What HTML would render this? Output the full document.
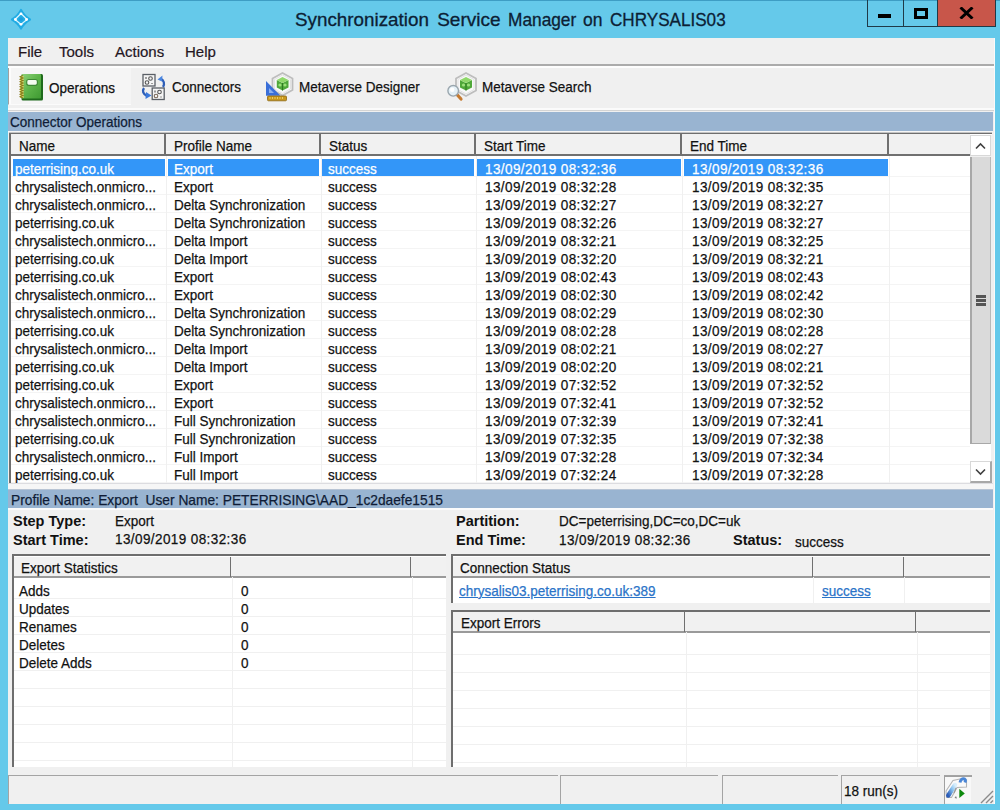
<!DOCTYPE html>
<html><head><meta charset="utf-8">
<style>
*{margin:0;padding:0;box-sizing:border-box}
html,body{width:1000px;height:810px;overflow:hidden;background:#65c9ea}
body{position:relative;font-family:"Liberation Sans",sans-serif;font-size:13.5px;color:#111}
.a{position:absolute}
.t{position:absolute;white-space:nowrap;line-height:1}
.ti{top:10px;font-size:19px;color:#0c2034;-webkit-text-stroke:0.3px #0c2034;transform-origin:0 0}
.wb{position:absolute;top:0;height:27px;border:1px solid #1f3a48;border-top:none}
#client{left:8px;top:38px;width:987px;height:766px;background:#f0f0f0;border-right:1px solid #fafafa}
.menu{top:44px;font-size:15px;color:#24161f;-webkit-text-stroke:0.2px #24161f}
.hbar{background:#99b4d1;color:#0f1c36}
.lv{background:#fff}
.hdr{position:absolute;background:#f1f1f1;border-bottom:2px solid #6e6e6e}
.hc{position:absolute;top:0;height:100%;border-right:2px solid #6e6e6e}
.row{position:absolute;left:0;height:18px;border-bottom:1px solid #f0f0f0}
.cell{position:absolute;top:3px;white-space:nowrap;line-height:1}
.sel{background:#3396f8;color:#fff}
.L{font-size:15px;transform:scaleX(0.9);transform-origin:0 0;-webkit-text-stroke:0.25px currentColor}
.L.d{letter-spacing:0.45px}
.b{font-weight:bold;font-size:14.5px}
a{color:#2a73c8;text-decoration:underline}
</style></head><body>
<!-- title bar -->
<div class="a" style="left:0;top:0;width:1000px;height:1px;background:#3e9dc4"></div>
<svg class="a" style="left:9px;top:7px" width="24" height="24" viewBox="0 0 24 24">
 <path d="M12 3 Q15 9 21 12.5 Q15 16 12 21.5 Q9 16 3 12.5 Q9 9 12 3 Z" fill="#22ace4" stroke="#22ace4" stroke-width="2.2" stroke-linejoin="round"/>
 <path d="M12 6.5 L18 12.5 L12 17.5 L6 12.5 Z" fill="none" stroke="#d8f4ff" stroke-width="1.3"/>
 <circle cx="12" cy="6.8" r="1.4" fill="#fff"/><circle cx="17.6" cy="12.5" r="1.4" fill="#fff"/>
 <circle cx="12" cy="17.3" r="1.4" fill="#fff"/><circle cx="6.4" cy="12.5" r="1.4" fill="#fff"/>
 <circle cx="12" cy="12.2" r="1.8" fill="#1a9ee0"/>
</svg>
<div class="t ti" style="left:295.4px;transform:scaleX(0.99)">Synchronization</div>
<div class="t ti" style="left:437.2px;transform:scaleX(1.0)">Service</div>
<div class="t ti" style="left:508px;transform:scaleX(0.91)">Manager</div>
<div class="t ti" style="left:583.2px;transform:scaleX(0.92)">on</div>
<div class="t ti" style="left:610.2px;transform:scaleX(0.9)">CHRYSALIS03</div>
<div class="wb" style="left:867px;width:37px"></div>
<div class="wb" style="left:903px;width:35px"></div>
<div class="wb" style="left:937px;width:59px;background:#c8564a"></div>
<div class="a" style="left:878px;top:14px;width:13px;height:4px;background:#000"></div>
<div class="a" style="left:914px;top:8px;width:14px;height:11px;border:3px solid #000"></div>
<svg class="a" style="left:959px;top:7px" width="15" height="12" viewBox="0 0 15 12"><path d="M1.5 0.5 L13.5 11.5 M13.5 0.5 L1.5 11.5" stroke="#000" stroke-width="3"/></svg>

<div id="client" class="a"></div>
<!-- menu -->
<div class="t menu" style="left:18px">File</div>
<div class="t menu" style="left:59px">Tools</div>
<div class="t menu" style="left:115px">Actions</div>
<div class="t menu" style="left:185px">Help</div>
<div class="a" style="left:8px;top:64px;width:986px;height:2px;background:#ababab"></div>
<div class="a" style="left:8px;top:66px;width:986px;height:2px;background:#fdfdfd"></div>
<div class="a" style="left:8px;top:108px;width:986px;height:2px;background:#fbfbfb"></div>
<div class="a" style="left:8px;top:110px;width:986px;height:1px;background:#d4d4d4"></div>
<!-- toolbar -->
<div class="a" style="left:8px;top:68px;width:123px;height:37px;background:#f5f5f5;border-left:1px solid #a0a0a0;border-bottom:1px solid #fbfbfb"></div>
<div class="a" style="left:9px;top:68px;width:2px;height:36px;background:#fcfcfc"></div>
<div class="t L" style="left:49px;top:80px">Operations</div>
<div class="t L" style="left:172px;top:79px">Connectors</div>
<div class="t L" style="left:299px;top:79px">Metaverse Designer</div>
<div class="t L" style="left:482px;top:79px">Metaverse Search</div>


<!-- toolbar icons -->
<svg class="a" style="left:18px;top:72px" width="28" height="31" viewBox="0 0 28 31">
 <defs><linearGradient id="gn" x1="0" y1="0" x2="1" y2="1"><stop offset="0" stop-color="#8ed27a"/><stop offset="0.5" stop-color="#5db449"/><stop offset="1" stop-color="#3f9a32"/></linearGradient></defs>
 <rect x="3.5" y="2" width="21.5" height="26.5" rx="1.5" fill="#1f6a1c"/>
 <rect x="3.5" y="2" width="19.5" height="24.5" rx="1" fill="url(#gn)"/>
 <rect x="8.7" y="7.5" width="10.7" height="5.8" rx="2" fill="#f4fbef" stroke="#3d8a33" stroke-width="1.2"/>
 <path d="M2 4 h3.5 v22 h-3.5 Z" fill="#e8e070"/>
 <path d="M5 3.5 L2.2 4.8 L5 6.0 L2.2 7.3 L5 8.5 L2.2 9.8 L5 11.0 L2.2 12.3 L5 13.5 L2.2 14.8 L5 16.0 L2.2 17.3 L5 18.5 L2.2 19.8 L5 21.0 L2.2 22.3 L5 23.5 L2.2 24.8 L5 26.0" fill="none" stroke="#857a1c" stroke-width="1.1"/>
</svg>
<svg class="a" style="left:140px;top:72px" width="28" height="30" viewBox="0 0 28 30">
 <rect x="3" y="2.5" width="12" height="11.5" fill="#f4f4f4" stroke="#5a5f66" stroke-width="1.3"/>
 <rect x="12.2" y="16" width="12" height="11.5" fill="#f4f4f4" stroke="#5a5f66" stroke-width="1.3"/>
 <circle cx="10.5" cy="6.5" r="1.8" fill="none" stroke="#555" stroke-width="1.1"/>
 <circle cx="7" cy="10.5" r="1.8" fill="none" stroke="#555" stroke-width="1.1"/>
 <path d="M6 5 v2 M12 11 v1" stroke="#555" stroke-width="1.1"/>
 <circle cx="19.5" cy="20" r="1.8" fill="none" stroke="#555" stroke-width="1.1"/>
 <circle cx="16" cy="24" r="1.8" fill="none" stroke="#7a6a5a" stroke-width="1.1"/>
 <path d="M15 18.5 v2 M21 24.5 v1" stroke="#555" stroke-width="1.1"/>
 <path d="M23 15 C25 12 24 8 20.5 6.5" fill="none" stroke="#2f5fb8" stroke-width="2.3"/>
 <path d="M17.5 7.5 L22.5 3.5 L22 9.5 Z" fill="#4a86e0"/>
 <path d="M4 16 C2 19 3 22 7 24" fill="none" stroke="#2f5fb8" stroke-width="2.3"/>
 <path d="M6 20 L11.5 23.5 L5.5 27 Z" fill="#3a78da"/>
</svg>
<svg class="a" style="left:264px;top:71px" width="32" height="32" viewBox="0 0 32 32">
 <path d="M18.5 2 L28.5 7.5 L28.5 19 L18.5 24.5 L8.5 19 L8.5 7.5 Z" fill="#f8f8f8" stroke="#bdbdbd" stroke-width="1.8"/>
 <path d="M18.5 4 L26.5 8.5 L26.5 18 L18.5 22.5 L10.5 18 L10.5 8.5 Z" fill="none" stroke="#e2e2e2" stroke-width="1"/>
 <path d="M12.8 9 L18.5 12 L24.5 9 L24.5 16.5 L18.5 19.5 L12.8 16.5 Z" fill="#4fa83a"/>
 <path d="M12.8 9 L18.5 6 L24.5 9 L18.5 12 Z" fill="#8fd86a"/>
 <path d="M18.5 12 V19.5" stroke="#2e7a22" stroke-width="1"/>
 <circle cx="16" cy="14" r="1.6" fill="#9be07a"/><circle cx="21" cy="14" r="1.6" fill="#9be07a"/>
 <path d="M2 10 L16.5 24.8 L2 24.8 Z" fill="#3a6fd8"/>
 <path d="M5 17 L10 22 L5 22 Z" fill="#8ab0f0"/>
 <rect x="3.5" y="25" width="19" height="4.8" rx="1" fill="#c8961c" stroke="#8a6410" stroke-width="0.8"/>
 <path d="M6 26 v2 M8.5 26 v2 M11 26 v2 M13.5 26 v2 M16 26 v2 M18.5 26 v2" stroke="#f5d870" stroke-width="0.8"/>
</svg>
<svg class="a" style="left:444px;top:71px" width="34" height="32" viewBox="0 0 34 32">
 <path d="M22 2 L32 7.5 L32 19.5 L22 25 L12 19.5 L12 7.5 Z" fill="#f8f8f8" stroke="#bdbdbd" stroke-width="1.8"/>
 <path d="M22 4 L30 8.5 L30 18.5 L22 23 L14 18.5 L14 8.5 Z" fill="none" stroke="#e2e2e2" stroke-width="1"/>
 <path d="M16 9 L22 12 L28 9 L28 16.5 L22 19.5 L16 16.5 Z" fill="#4fa83a"/>
 <path d="M16 9 L22 6 L28 9 L22 12 Z" fill="#8fd86a"/>
 <path d="M22 12 V19.5" stroke="#2e7a22" stroke-width="1"/>
 <circle cx="19.5" cy="14" r="1.6" fill="#9be07a"/><circle cx="24.5" cy="14" r="1.6" fill="#9be07a"/>
 <path d="M12.5 23 L17 28" stroke="#c57a30" stroke-width="3.2" stroke-linecap="round"/>
 <circle cx="9.2" cy="19.8" r="5.3" fill="#e6f2f8" stroke="#9aa6ae" stroke-width="1.4"/>
 <circle cx="8.2" cy="18.8" r="2.2" fill="#ffffff"/>
</svg>
<!-- status icon -->
<div class="a" style="left:945px;top:777px;width:26px;height:26px;background:#f8f8f8"></div>
<svg class="a" style="left:944px;top:775px" width="28" height="28" viewBox="0 0 28 28">
 <defs><linearGradient id="bl" x1="0" y1="1" x2="1" y2="0"><stop offset="0" stop-color="#2a5cb8"/><stop offset="0.6" stop-color="#8cc4f0"/><stop offset="1" stop-color="#d8eefc"/></linearGradient></defs>
 <path d="M2 16 L9 5.5 L18 3.5 L22.5 5 L22.5 12 L13 12.5 L7.5 22.5 L2.5 22.5 Z" fill="#fafafa" stroke="#b4b4b4" stroke-width="1.1"/>
 <path d="M4.3 20.5 L11 10" stroke="url(#bl)" stroke-width="4.5" stroke-linecap="round"/>
 <path d="M16 7.5 Q17 3 20.5 4 Q22 5 21 7.5" fill="none" stroke="#4a86d6" stroke-width="3"/>
 <path d="M12 13 L10 18" stroke="#9a9a9a" stroke-width="1.2"/>
 <path d="M15.3 13.8 L20.8 18.6 L15.3 23 Z" fill="#0e8a0e"/>
 <path d="M10.5 23 L13 23.5 L12 21 Z" fill="#7a7a7a"/>
</svg>
<svg class="a" style="left:978px;top:787px" width="16" height="17" viewBox="0 0 16 17">
 <path d="M3 16 L15 4 M8 16 L15 9 M12.5 16 L15 13.5" stroke="#8a8a8a" stroke-width="1.4"/>
</svg>

<!-- connector operations bar -->
<div class="a hbar" style="left:8px;top:112px;width:985px;height:19px"></div>
<div class="t L" style="left:10px;top:114px;color:#0f1c36">Connector Operations</div>

<!-- list view -->
<div class="a lv" style="left:9px;top:132px;width:983px;height:351px;border-top:2px solid #6e6e6e;border-left:2px solid #6e6e6e"></div>
<div class="a" style="left:8px;top:131px;width:985px;height:1px;background:#f6f6f6"></div>
<div class="a" style="left:9px;top:132px;width:983px;height:1px;background:#c4c4c4"></div>

<div class="a" style="left:11px;top:134px;width:959px;height:22px;background:#f1f1f1"></div>
<div class="a" style="left:11px;top:154px;width:959px;height:2px;background:#707070"></div>
<div class="a" style="left:164px;top:134px;width:2px;height:22px;background:#707070"></div>
<div class="a" style="left:319px;top:134px;width:2px;height:22px;background:#707070"></div>
<div class="a" style="left:474px;top:134px;width:2px;height:22px;background:#707070"></div>
<div class="a" style="left:680px;top:134px;width:2px;height:22px;background:#707070"></div>
<div class="a" style="left:887px;top:134px;width:2px;height:22px;background:#707070"></div>
<div class="t L" style="left:19px;top:137.5px">Name</div>
<div class="t L" style="left:174px;top:137.5px">Profile Name</div>
<div class="t L" style="left:329px;top:137.5px">Status</div>
<div class="t L" style="left:484px;top:137.5px">Start Time</div>
<div class="t L" style="left:690px;top:137.5px">End Time</div>
<div class="a" style="left:11px;top:176px;width:959px;height:1px;background:#f4f4f4"></div>
<div class="a" style="left:13px;top:159px;width:152px;height:17px;background:#3396f8"></div>
<div class="a" style="left:168px;top:159px;width:151px;height:17px;background:#3396f8"></div>
<div class="a" style="left:322px;top:159px;width:152px;height:17px;background:#3396f8"></div>
<div class="a" style="left:477px;top:159px;width:204px;height:17px;background:#3396f8"></div>
<div class="a" style="left:684px;top:159px;width:204px;height:17px;background:#3396f8"></div>
<div class="t L " style="left:15px;top:161px;color:#fff">peterrising.co.uk</div>
<div class="t L " style="left:174px;top:161px;color:#fff">Export</div>
<div class="t L " style="left:328px;top:161px;color:#fff">success</div>
<div class="t L d" style="left:485px;top:161px;color:#fff">13/09/2019 08:32:36</div>
<div class="t L d" style="left:691.5px;top:161px;color:#fff">13/09/2019 08:32:36</div>
<div class="a" style="left:11px;top:194px;width:959px;height:1px;background:#f4f4f4"></div>
<div class="t L " style="left:15px;top:179px;color:#111">chrysalistech.onmicro...</div>
<div class="t L " style="left:174px;top:179px;color:#111">Export</div>
<div class="t L " style="left:328px;top:179px;color:#111">success</div>
<div class="t L d" style="left:485px;top:179px;color:#111">13/09/2019 08:32:28</div>
<div class="t L d" style="left:691.5px;top:179px;color:#111">13/09/2019 08:32:35</div>
<div class="a" style="left:11px;top:212px;width:959px;height:1px;background:#f4f4f4"></div>
<div class="t L " style="left:15px;top:197px;color:#111">chrysalistech.onmicro...</div>
<div class="t L " style="left:174px;top:197px;color:#111">Delta Synchronization</div>
<div class="t L " style="left:328px;top:197px;color:#111">success</div>
<div class="t L d" style="left:485px;top:197px;color:#111">13/09/2019 08:32:27</div>
<div class="t L d" style="left:691.5px;top:197px;color:#111">13/09/2019 08:32:27</div>
<div class="a" style="left:11px;top:230px;width:959px;height:1px;background:#f4f4f4"></div>
<div class="t L " style="left:15px;top:215px;color:#111">peterrising.co.uk</div>
<div class="t L " style="left:174px;top:215px;color:#111">Delta Synchronization</div>
<div class="t L " style="left:328px;top:215px;color:#111">success</div>
<div class="t L d" style="left:485px;top:215px;color:#111">13/09/2019 08:32:26</div>
<div class="t L d" style="left:691.5px;top:215px;color:#111">13/09/2019 08:32:27</div>
<div class="a" style="left:11px;top:248px;width:959px;height:1px;background:#f4f4f4"></div>
<div class="t L " style="left:15px;top:233px;color:#111">chrysalistech.onmicro...</div>
<div class="t L " style="left:174px;top:233px;color:#111">Delta Import</div>
<div class="t L " style="left:328px;top:233px;color:#111">success</div>
<div class="t L d" style="left:485px;top:233px;color:#111">13/09/2019 08:32:21</div>
<div class="t L d" style="left:691.5px;top:233px;color:#111">13/09/2019 08:32:25</div>
<div class="a" style="left:11px;top:266px;width:959px;height:1px;background:#f4f4f4"></div>
<div class="t L " style="left:15px;top:251px;color:#111">peterrising.co.uk</div>
<div class="t L " style="left:174px;top:251px;color:#111">Delta Import</div>
<div class="t L " style="left:328px;top:251px;color:#111">success</div>
<div class="t L d" style="left:485px;top:251px;color:#111">13/09/2019 08:32:20</div>
<div class="t L d" style="left:691.5px;top:251px;color:#111">13/09/2019 08:32:21</div>
<div class="a" style="left:11px;top:284px;width:959px;height:1px;background:#f4f4f4"></div>
<div class="t L " style="left:15px;top:269px;color:#111">peterrising.co.uk</div>
<div class="t L " style="left:174px;top:269px;color:#111">Export</div>
<div class="t L " style="left:328px;top:269px;color:#111">success</div>
<div class="t L d" style="left:485px;top:269px;color:#111">13/09/2019 08:02:43</div>
<div class="t L d" style="left:691.5px;top:269px;color:#111">13/09/2019 08:02:43</div>
<div class="a" style="left:11px;top:302px;width:959px;height:1px;background:#f4f4f4"></div>
<div class="t L " style="left:15px;top:287px;color:#111">chrysalistech.onmicro...</div>
<div class="t L " style="left:174px;top:287px;color:#111">Export</div>
<div class="t L " style="left:328px;top:287px;color:#111">success</div>
<div class="t L d" style="left:485px;top:287px;color:#111">13/09/2019 08:02:30</div>
<div class="t L d" style="left:691.5px;top:287px;color:#111">13/09/2019 08:02:42</div>
<div class="a" style="left:11px;top:320px;width:959px;height:1px;background:#f4f4f4"></div>
<div class="t L " style="left:15px;top:305px;color:#111">chrysalistech.onmicro...</div>
<div class="t L " style="left:174px;top:305px;color:#111">Delta Synchronization</div>
<div class="t L " style="left:328px;top:305px;color:#111">success</div>
<div class="t L d" style="left:485px;top:305px;color:#111">13/09/2019 08:02:29</div>
<div class="t L d" style="left:691.5px;top:305px;color:#111">13/09/2019 08:02:30</div>
<div class="a" style="left:11px;top:338px;width:959px;height:1px;background:#f4f4f4"></div>
<div class="t L " style="left:15px;top:323px;color:#111">peterrising.co.uk</div>
<div class="t L " style="left:174px;top:323px;color:#111">Delta Synchronization</div>
<div class="t L " style="left:328px;top:323px;color:#111">success</div>
<div class="t L d" style="left:485px;top:323px;color:#111">13/09/2019 08:02:28</div>
<div class="t L d" style="left:691.5px;top:323px;color:#111">13/09/2019 08:02:28</div>
<div class="a" style="left:11px;top:356px;width:959px;height:1px;background:#f4f4f4"></div>
<div class="t L " style="left:15px;top:341px;color:#111">chrysalistech.onmicro...</div>
<div class="t L " style="left:174px;top:341px;color:#111">Delta Import</div>
<div class="t L " style="left:328px;top:341px;color:#111">success</div>
<div class="t L d" style="left:485px;top:341px;color:#111">13/09/2019 08:02:21</div>
<div class="t L d" style="left:691.5px;top:341px;color:#111">13/09/2019 08:02:27</div>
<div class="a" style="left:11px;top:374px;width:959px;height:1px;background:#f4f4f4"></div>
<div class="t L " style="left:15px;top:359px;color:#111">peterrising.co.uk</div>
<div class="t L " style="left:174px;top:359px;color:#111">Delta Import</div>
<div class="t L " style="left:328px;top:359px;color:#111">success</div>
<div class="t L d" style="left:485px;top:359px;color:#111">13/09/2019 08:02:20</div>
<div class="t L d" style="left:691.5px;top:359px;color:#111">13/09/2019 08:02:21</div>
<div class="a" style="left:11px;top:392px;width:959px;height:1px;background:#f4f4f4"></div>
<div class="t L " style="left:15px;top:377px;color:#111">peterrising.co.uk</div>
<div class="t L " style="left:174px;top:377px;color:#111">Export</div>
<div class="t L " style="left:328px;top:377px;color:#111">success</div>
<div class="t L d" style="left:485px;top:377px;color:#111">13/09/2019 07:32:52</div>
<div class="t L d" style="left:691.5px;top:377px;color:#111">13/09/2019 07:32:52</div>
<div class="a" style="left:11px;top:410px;width:959px;height:1px;background:#f4f4f4"></div>
<div class="t L " style="left:15px;top:395px;color:#111">chrysalistech.onmicro...</div>
<div class="t L " style="left:174px;top:395px;color:#111">Export</div>
<div class="t L " style="left:328px;top:395px;color:#111">success</div>
<div class="t L d" style="left:485px;top:395px;color:#111">13/09/2019 07:32:41</div>
<div class="t L d" style="left:691.5px;top:395px;color:#111">13/09/2019 07:32:52</div>
<div class="a" style="left:11px;top:428px;width:959px;height:1px;background:#f4f4f4"></div>
<div class="t L " style="left:15px;top:413px;color:#111">chrysalistech.onmicro...</div>
<div class="t L " style="left:174px;top:413px;color:#111">Full Synchronization</div>
<div class="t L " style="left:328px;top:413px;color:#111">success</div>
<div class="t L d" style="left:485px;top:413px;color:#111">13/09/2019 07:32:39</div>
<div class="t L d" style="left:691.5px;top:413px;color:#111">13/09/2019 07:32:41</div>
<div class="a" style="left:11px;top:446px;width:959px;height:1px;background:#f4f4f4"></div>
<div class="t L " style="left:15px;top:431px;color:#111">peterrising.co.uk</div>
<div class="t L " style="left:174px;top:431px;color:#111">Full Synchronization</div>
<div class="t L " style="left:328px;top:431px;color:#111">success</div>
<div class="t L d" style="left:485px;top:431px;color:#111">13/09/2019 07:32:35</div>
<div class="t L d" style="left:691.5px;top:431px;color:#111">13/09/2019 07:32:38</div>
<div class="a" style="left:11px;top:464px;width:959px;height:1px;background:#f4f4f4"></div>
<div class="t L " style="left:15px;top:449px;color:#111">chrysalistech.onmicro...</div>
<div class="t L " style="left:174px;top:449px;color:#111">Full Import</div>
<div class="t L " style="left:328px;top:449px;color:#111">success</div>
<div class="t L d" style="left:485px;top:449px;color:#111">13/09/2019 07:32:28</div>
<div class="t L d" style="left:691.5px;top:449px;color:#111">13/09/2019 07:32:34</div>
<div class="a" style="left:11px;top:482px;width:959px;height:1px;background:#f4f4f4"></div>
<div class="t L " style="left:15px;top:467px;color:#111">peterrising.co.uk</div>
<div class="t L " style="left:174px;top:467px;color:#111">Full Import</div>
<div class="t L " style="left:328px;top:467px;color:#111">success</div>
<div class="t L d" style="left:485px;top:467px;color:#111">13/09/2019 07:32:24</div>
<div class="t L d" style="left:691.5px;top:467px;color:#111">13/09/2019 07:32:28</div>
<div class="a" style="left:166px;top:156px;width:1px;height:327px;background:#f0f0f0"></div>
<div class="a" style="left:321px;top:156px;width:1px;height:327px;background:#f0f0f0"></div>
<div class="a" style="left:476px;top:156px;width:1px;height:327px;background:#f0f0f0"></div>
<div class="a" style="left:682px;top:156px;width:1px;height:327px;background:#f0f0f0"></div>
<div class="a" style="left:889px;top:156px;width:1px;height:327px;background:#f0f0f0"></div>

<!-- scrollbar -->
<div class="a" style="left:970px;top:135px;width:22px;height:348px;background:#f0f0f0"></div>
<div class="a" style="left:970px;top:135px;width:21px;height:21px;background:#fff;border:1px solid #d8d8d8"></div>
<svg class="a" style="left:975px;top:142px" width="11" height="8" viewBox="0 0 11 8"><path d="M1 6.5 L5.5 2 L10 6.5" fill="none" stroke="#404040" stroke-width="1.6"/></svg>
<div class="a" style="left:970px;top:157px;width:21px;height:287px;background:#dadada;border-left:2px solid #a8a8a8;border-right:1px solid #b8b8b8;border-bottom:1px solid #a8a8a8"></div>
<div class="a" style="left:976px;top:295px;width:10px;height:2.5px;background:#555"></div>
<div class="a" style="left:976px;top:299px;width:10px;height:2.5px;background:#555"></div>
<div class="a" style="left:976px;top:303px;width:10px;height:2.5px;background:#555"></div>
<div class="a" style="left:970px;top:444px;width:21px;height:18px;background:#fff"></div>
<div class="a" style="left:970px;top:461px;width:22px;height:22px;background:#fff;border:1px solid #d8d8d8;border-right:2px solid #a8a8a8;border-bottom:2px solid #a8a8a8"></div>
<svg class="a" style="left:975px;top:468px" width="11" height="8" viewBox="0 0 11 8"><path d="M1 1.5 L5.5 6 L10 1.5" fill="none" stroke="#404040" stroke-width="1.6"/></svg>

<!-- details -->
<div class="a" style="left:8px;top:483px;width:985px;height:1px;background:#dcdce0"></div>
<div class="a" style="left:8px;top:484px;width:985px;height:5px;background:#f6f6f6"></div>
<div class="a" style="left:8px;top:489px;width:985px;height:1px;background:#b8c4d4"></div>
<div class="a hbar" style="left:8px;top:489.5px;width:985px;height:18.5px"></div>
<div class="a" style="left:8px;top:508px;width:985px;height:2px;background:#fbfbfb"></div>
<div class="t L" style="left:10.5px;top:492px;transform:scaleX(0.917);color:#0f1c36">Profile Name: Export&nbsp; User Name: PETERRISING\AAD_1c2daefe1515</div>
<div class="t b" style="left:13px;top:514px">Step Type:</div>
<div class="t L" style="left:115px;top:513px">Export</div>
<div class="t b" style="left:13px;top:533px">Start Time:</div>
<div class="t L d" style="left:115px;top:531px">13/09/2019 08:32:36</div>
<div class="t b" style="left:456px;top:514px">Partition:</div>
<div class="t L" style="left:559px;top:513px">DC=peterrising,DC=co,DC=uk</div>
<div class="t b" style="left:456px;top:533px">End Time:</div>
<div class="t L d" style="left:559px;top:532px">13/09/2019 08:32:36</div>
<div class="t b" style="left:733px;top:533px">Status:</div>
<div class="t L" style="left:795px;top:534px">success</div>


<!-- left panel: export statistics -->
<div class="a" style="left:12px;top:554px;width:434px;height:213px;background:#fff;border-top:2px solid #6e6e6e;border-left:2px solid #6e6e6e"></div>
<div class="a" style="left:14px;top:557px;width:432px;height:21px;background:#f1f1f1;border-bottom:2px solid #9a9a9a"></div>
<div class="a" style="left:230px;top:557px;width:1px;height:20px;background:#707070"></div>
<div class="a" style="left:410px;top:557px;width:1px;height:20px;background:#707070"></div>
<div class="t L" style="left:21px;top:560px">Export Statistics</div>
<div class="a" style="left:14px;top:598px;width:432px;height:1px;background:#f0f0f0"></div>
<div class="a" style="left:14px;top:616px;width:432px;height:1px;background:#f0f0f0"></div>
<div class="a" style="left:14px;top:634px;width:432px;height:1px;background:#f0f0f0"></div>
<div class="a" style="left:14px;top:652px;width:432px;height:1px;background:#f0f0f0"></div>
<div class="a" style="left:14px;top:670px;width:432px;height:1px;background:#f0f0f0"></div>
<div class="a" style="left:14px;top:688px;width:432px;height:1px;background:#f0f0f0"></div>
<div class="a" style="left:14px;top:706px;width:432px;height:1px;background:#f0f0f0"></div>
<div class="a" style="left:14px;top:724px;width:432px;height:1px;background:#f0f0f0"></div>
<div class="a" style="left:14px;top:742px;width:432px;height:1px;background:#f0f0f0"></div>
<div class="a" style="left:14px;top:760px;width:432px;height:1px;background:#f0f0f0"></div>
<div class="a" style="left:232px;top:577px;width:1px;height:190px;background:#f0f0f0"></div>
<div class="a" style="left:412px;top:577px;width:1px;height:190px;background:#f0f0f0"></div>
<div class="t L" style="left:19px;top:583px">Adds</div>
<div class="t L" style="left:241px;top:583px">0</div>
<div class="t L" style="left:19px;top:601px">Updates</div>
<div class="t L" style="left:241px;top:601px">0</div>
<div class="t L" style="left:19px;top:619px">Renames</div>
<div class="t L" style="left:241px;top:619px">0</div>
<div class="t L" style="left:19px;top:637px">Deletes</div>
<div class="t L" style="left:241px;top:637px">0</div>
<div class="t L" style="left:19px;top:655px">Delete Adds</div>
<div class="t L" style="left:241px;top:655px">0</div>
<!-- connection status -->
<div class="a" style="left:451px;top:554px;width:539px;height:49px;background:#fff;border-top:2px solid #6e6e6e;border-left:2px solid #6e6e6e"></div>
<div class="a" style="left:453px;top:557px;width:537px;height:21px;background:#f1f1f1;border-bottom:2px solid #9a9a9a"></div>
<div class="a" style="left:812px;top:557px;width:1px;height:20px;background:#707070"></div>
<div class="a" style="left:903px;top:557px;width:1px;height:20px;background:#707070"></div>
<div class="t L" style="left:460px;top:560px">Connection Status</div>
<div class="t L" style="left:459px;top:583px"><a style="color:#2a73c8">chrysalis03.peterrising.co.uk:389</a></div>
<div class="t L" style="left:822px;top:583px"><a style="color:#2a73c8">success</a></div>
<div class="a" style="left:813px;top:577px;width:1px;height:26px;background:#f0f0f0"></div>
<div class="a" style="left:904px;top:577px;width:1px;height:26px;background:#f0f0f0"></div>
<!-- export errors -->
<div class="a" style="left:451px;top:610px;width:539px;height:157px;background:#fff;border-top:2px solid #6e6e6e;border-left:2px solid #6e6e6e"></div>
<div class="a" style="left:453px;top:612px;width:537px;height:21px;background:#f1f1f1;border-bottom:2px solid #9a9a9a"></div>
<div class="a" style="left:684px;top:612px;width:1px;height:20px;background:#707070"></div>
<div class="a" style="left:915px;top:612px;width:1px;height:20px;background:#707070"></div>
<div class="t L" style="left:461px;top:615px">Export Errors</div>
<div class="a" style="left:453px;top:654px;width:537px;height:1px;background:#f0f0f0"></div>
<div class="a" style="left:453px;top:672px;width:537px;height:1px;background:#f0f0f0"></div>
<div class="a" style="left:453px;top:690px;width:537px;height:1px;background:#f0f0f0"></div>
<div class="a" style="left:453px;top:708px;width:537px;height:1px;background:#f0f0f0"></div>
<div class="a" style="left:453px;top:726px;width:537px;height:1px;background:#f0f0f0"></div>
<div class="a" style="left:453px;top:744px;width:537px;height:1px;background:#f0f0f0"></div>
<div class="a" style="left:453px;top:762px;width:537px;height:1px;background:#f0f0f0"></div>
<div class="a" style="left:686px;top:632px;width:1px;height:135px;background:#f0f0f0"></div>
<div class="a" style="left:917px;top:632px;width:1px;height:135px;background:#f0f0f0"></div>
<!-- status bar -->
<div class="a" style="left:8px;top:775px;width:550px;height:29px;border-left:1px solid #a4a4a4;border-top:1px solid #a4a4a4"></div>
<div class="a" style="left:560px;top:775px;width:158px;height:29px;border-left:1px solid #a4a4a4;border-top:1px solid #a4a4a4"></div>
<div class="a" style="left:722px;top:775px;width:116px;height:29px;border-left:1px solid #a4a4a4;border-top:1px solid #a4a4a4"></div>
<div class="a" style="left:841px;top:775px;width:99px;height:29px;border-left:1px solid #a4a4a4;border-top:1px solid #a4a4a4"></div>
<div class="a" style="left:944px;top:775px;width:28px;height:29px;border-left:1px solid #a4a4a4;border-top:1px solid #a4a4a4"></div>
<div class="t L" style="left:844px;top:783px">18 run(s)</div>
<div class="a" style="left:944px;top:776px;width:28px;height:27px;border-left:1px solid #a0a0a0;border-top:1px solid #a0a0a0"></div>
</body></html>
